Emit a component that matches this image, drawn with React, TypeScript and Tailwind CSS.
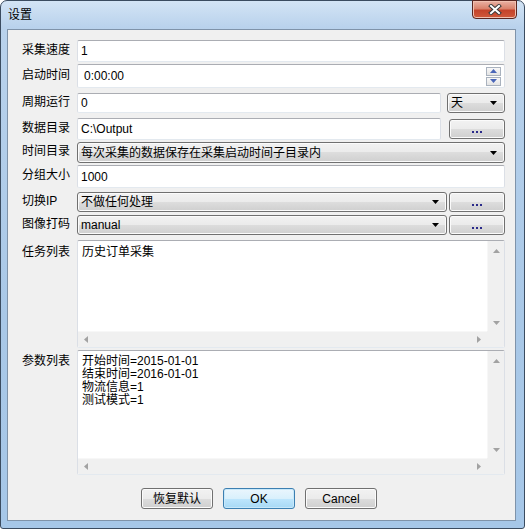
import React from "react";

const FONT = { fontFamily: '"Liberation Sans", "Noto Sans CJK SC", sans-serif' };

const btnBg =
  "bg-[linear-gradient(180deg,#f2f2f2_0%,#ebebeb_50%,#dddddd_50%,#cfcfcf_100%)] border border-[#707070] rounded-[3px] shadow-[inset_0_0_0_1px_#fbfbfb]";

const inputBox =
  "bg-white border border-t-[#abadb3] border-x-[#dbdfe6] border-b-[#e3e9ef] rounded-[2px]";

function DownArrow({ color = "#000" }: { color?: string }) {
  return (
    <svg width="7" height="4" viewBox="0 0 7 4">
      <path d="M0 0h7L3.5 4z" fill={color} />
    </svg>
  );
}

function Combo({ text, className = "" }: { text: string; className?: string }) {
  return (
    <div className={`${btnBg} flex items-center justify-between pl-[3px] pr-[7px] ${className}`}>
      <span className="text-[12px] leading-none text-black whitespace-nowrap">{text}</span>
      <DownArrow />
    </div>
  );
}

function DotsButton({ className = "" }: { className?: string }) {
  return (
    <div className={`${btnBg} flex items-end justify-center pb-[5px] ${className}`}>
      <div className="flex gap-[2px]">
        <span className="w-[2px] h-[2px] bg-[#2a2a8a]" />
        <span className="w-[2px] h-[2px] bg-[#2a2a8a]" />
        <span className="w-[2px] h-[2px] bg-[#2a2a8a]" />
      </div>
    </div>
  );
}

function Label({ text }: { text: string }) {
  return <div className="w-[55px] shrink-0 text-[12px] leading-none text-black -mt-[3px]">{text}</div>;
}

function ScrollArrow({ dir }: { dir: "up" | "down" | "left" | "right" }) {
  const d = {
    up: "M0 4h7L3.5 0z",
    down: "M0 0h7L3.5 4z",
    left: "M4 0v7L0 3.5z",
    right: "M0 0v7L4 3.5z",
  }[dir];
  const vertical = dir === "up" || dir === "down";
  return (
    <svg width={vertical ? 7 : 4} height={vertical ? 4 : 7} viewBox={vertical ? "0 0 7 4" : "0 0 4 7"}>
      <path d={d} fill="#a2a2a2" />
    </svg>
  );
}

function ListBox({ lines, height, topPad }: { lines: string[]; height: string; topPad: string }) {
  return (
    <div className={`flex-1 ${height} ${inputBox} flex flex-col overflow-hidden`}>
      <div className="flex flex-1 min-h-0">
        <div className={`flex-1 pl-[4px] ${topPad} text-[12px] leading-[13px] text-black`}>
          {lines.map((l) => (
            <div key={l}>{l}</div>
          ))}
        </div>
        <div className="w-[17px] bg-[#f0f0f0] border-l border-[#f7f7f7] flex flex-col items-center justify-between pt-[8px] pb-[6px]">
          <ScrollArrow dir="up" />
          <ScrollArrow dir="down" />
        </div>
      </div>
      <div className="flex h-[16px]">
        <div className="flex-1 bg-[#f0f0f0] border-t border-[#f7f7f7] flex items-center justify-between px-[6px]">
          <ScrollArrow dir="left" />
          <ScrollArrow dir="right" />
        </div>
        <div className="w-[17px] bg-[#f0f0f0]" />
      </div>
    </div>
  );
}

export default function App() {
  return (
    <div
      className="w-[525px] h-[529px] flex flex-col rounded-t-[7px] rounded-b-[3px] border border-[#3b4c60] bg-[linear-gradient(180deg,#d3e4f5_0%,#b9d2ec_5%,#a9c8e7_60%,#a6c7e8_100%)]"
      style={FONT}
    >
      {/* title bar */}
      <div className="h-[28px] flex items-start justify-between pl-[7px] pr-[7px]">
        <div className="text-[12px] leading-none text-black pt-[8px]">设置</div>
        <div className="w-[45px] h-[19px] -mt-[1px] rounded-b-[4px] border border-[#5a2620] bg-[linear-gradient(180deg,#eab2a4_0%,#d9826c_45%,#c4432a_55%,#d0593b_100%)] shadow-[inset_0_0_0_1px_#f0c0b0] flex items-center justify-center">
          <svg width="14" height="11" viewBox="0 0 14 11">
            <path d="M3 2L11 9M11 2L3 9" stroke="#3a3a3a" strokeWidth="4" strokeLinecap="square" />
            <path d="M3 2L11 9M11 2L3 9" stroke="#ffffff" strokeWidth="2" strokeLinecap="square" />
          </svg>
        </div>
      </div>

      {/* client area */}
      <div className="mx-[6px] mr-[8px] mb-[7px] flex-1 border border-[#7f93a9] bg-[#f0f0f0] flex flex-col pl-[14px] pr-[10px]">
        <div className="flex items-center mt-[10px] h-[22px]">
          <Label text="采集速度" />
          <div className={`flex-1 h-[22px] ${inputBox} flex items-center pl-[3px] text-[12px] text-black`}>1</div>
        </div>

        <div className="flex items-center mt-[2px] h-[24px]">
          <Label text="启动时间" />
          <div className={`flex-1 h-[24px] ${inputBox} flex items-center justify-between pl-[6px] pr-[3px] text-[12px] text-black`}>
            <span>0:00:00</span>
            <div className="flex flex-col gap-[1px]">
              <div className="w-[15px] h-[9px] border border-[#a9b2be] bg-[linear-gradient(180deg,#f8f8f8,#e4e4e4)] flex items-center justify-center">
                <svg width="7" height="4" viewBox="0 0 7 4">
                  <path d="M0 4h7L3.5 0z" fill="#4a66b8" />
                </svg>
              </div>
              <div className="w-[15px] h-[9px] border border-[#a9b2be] bg-[linear-gradient(180deg,#f8f8f8,#e4e4e4)] flex items-center justify-center">
                <svg width="7" height="4" viewBox="0 0 7 4">
                  <path d="M0 0h7L3.5 4z" fill="#4a66b8" />
                </svg>
              </div>
            </div>
          </div>
        </div>

        <div className="flex items-center mt-[5px] h-[20px]">
          <Label text="周期运行" />
          <div className={`flex-1 h-[20px] ${inputBox} flex items-center pl-[3px] text-[12px] text-black`}>0</div>
          <Combo text="天" className="w-[58px] h-[20px] ml-[6px]" />
        </div>

        <div className="flex items-center mt-[5px] h-[22px]">
          <Label text="数据目录" />
          <div className={`flex-1 h-[22px] ${inputBox} flex items-center pl-[3px] text-[12px] text-black`}>C:\Output</div>
          <DotsButton className="w-[56px] h-[20px] ml-[8px]" />
        </div>

        <div className="flex items-center mt-[2px] h-[21px]">
          <Label text="时间目录" />
          <Combo text="每次采集的数据保存在采集启动时间子目录内" className="flex-1 h-[21px]" />
        </div>

        <div className="flex items-center mt-[2px] h-[23px]">
          <Label text="分组大小" />
          <div className={`flex-1 h-[23px] ${inputBox} flex items-center pl-[3px] text-[12px] text-black`}>1000</div>
        </div>

        <div className="flex items-center mt-[4px] h-[20px]">
          <Label text="切换IP" />
          <Combo text="不做任何处理" className="flex-1 h-[20px]" />
          <DotsButton className="w-[56px] h-[20px] ml-[2px]" />
        </div>

        <div className="flex items-center mt-[3px] h-[20px]">
          <Label text="图像打码" />
          <Combo text="manual" className="flex-1 h-[20px]" />
          <DotsButton className="w-[56px] h-[20px] ml-[2px]" />
        </div>

        <div className="flex items-start mt-[5px]">
          <div className="w-[55px] shrink-0 text-[12px] leading-none text-black pt-[6px]">任务列表</div>
          <ListBox lines={["历史订单采集"]} height="h-[108px]" topPad="pt-[5px]" />
        </div>

        <div className="flex items-start mt-[2px]">
          <div className="w-[55px] shrink-0 text-[12px] leading-none text-black pt-[5px]">参数列表</div>
          <ListBox
            lines={["开始时间=2015-01-01", "结束时间=2016-01-01", "物流信息=1", "测试模式=1"]}
            height="h-[125px]"
            topPad="pt-[4px]"
          />
        </div>

        <div className="flex mt-[13px] pl-[119px] gap-[10px]">
          <div className={`${btnBg} w-[72px] h-[21px] flex items-center justify-center text-[12px] text-black`}>恢复默认</div>
          <div className="w-[72px] h-[21px] rounded-[3px] border border-[#3c7fb1] bg-[linear-gradient(180deg,#eaf6fd_0%,#d9f0fc_50%,#bee6fd_50%,#a7d9f5_100%)] shadow-[inset_0_0_0_1px_#c8e8fa] flex items-center justify-center text-[12px] text-black">
            OK
          </div>
          <div className={`${btnBg} w-[72px] h-[21px] flex items-center justify-center text-[12px] text-black`}>Cancel</div>
        </div>
      </div>
    </div>
  );
}
